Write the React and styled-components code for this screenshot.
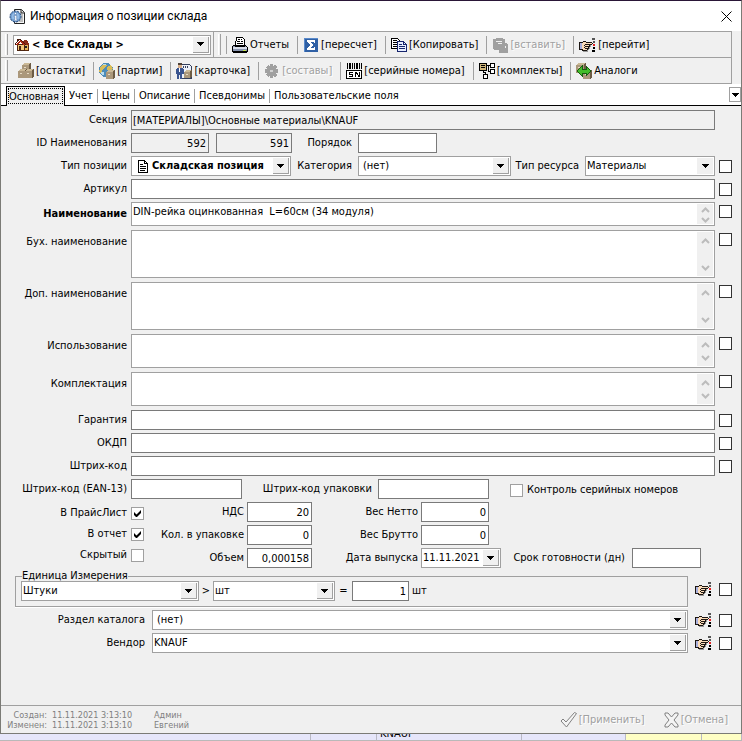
import React from "react";
import styled, { createGlobalStyle, css } from "styled-components";

const GlobalStyle = createGlobalStyle`
  * {
    box-sizing: border-box;
  }

  body {
    margin: 0;
    background: #e6e6fa;
    color: #000;
    font: 11px/14px "DejaVu Sans Condensed", "Noto Sans", sans-serif;
  }

  button, input, select, textarea {
    margin: 0;
    padding: 0;
    border: 0;
    border-radius: 0;
    background: none;
    color: inherit;
    font: inherit;
    outline: none;
  }
`;

const Page = styled.div`
  min-height: 100vh;
  display: flex;
  flex-direction: column;
`;

const Window = styled.main`
  flex: 1;
  display: flex;
  flex-direction: column;
  background: #f0f0f0;
  border: 1px solid #7b7b76;
  border-top-color: #2a1637;
`;

/* title */

const TitleBar = styled.header`
  height: 30px;
  padding: 0 7px 0 8px;
  display: flex;
  align-items: center;
  gap: 4px;
  background: #fff;

  h1 {
    flex: 1;
    margin: 0;
    font: 12px/16px Roboto, "Noto Sans", sans-serif;
  }

  button {
    display: flex;
    padding: 2px;
  }
`;

/* toolbars */

const Toolbars = styled.div`
  margin-right: 9px;
  border: solid #a0a0a0;
  border-width: 1px 1px 0 0;
`;

const Toolbar = styled.div`
  height: 26px;
  display: flex;
  align-items: center;
  border-bottom: 1px solid #a0a0a0;
`;

const Grip = styled.span`
  width: 3px;
  height: 21px;
  margin: 0 5px 0 4px;
  border-left: 1px solid #fff;
  border-right: 1px solid #a0a0a0;
`;

const BandEdge = styled.span`
  align-self: stretch;
  margin-left: 2px;
  border-left: 1px solid #a0a0a0;
`;

const Separator = styled.span`
  width: 1px;
  height: 18px;
  background: #a0a0a0;
`;

const ToolButton = styled.button`
  display: flex;
  align-items: center;
  gap: 2px;
  padding: 0 8px 0 5px;
  white-space: nowrap;

  &:disabled {
    color: #a0a0a0;
    text-shadow: 1px 1px 0 #fff;
  }
`;

/* tabs */

const Tabs = styled.nav`
  height: 22px;
  padding-left: 5px;
  display: flex;
  align-items: flex-end;
  background: #fff;
  border-bottom: 1px solid #000;
`;

const Tab = styled.button`
  height: 18px;
  padding: 0 5px 0 4px;
  white-space: nowrap;

  ${({ $active }) =>
    $active
      ? css`
          height: 20px;
          margin-bottom: -1px;
          padding: 0 5px 0 2px;
          background: #f0f0f0;
          border: solid #000;
          border-width: 1px 1px 0 1px;
          outline: 1px dotted #000;
          outline-offset: -3px;
        `
      : css`
          background: linear-gradient(#a0a0a0, #a0a0a0) right 2px / 1px 14px no-repeat;
        `}

  &:nth-last-of-type(2) {
    background: none;
  }
`;

const TabMenu = styled.button`
  width: 12px;
  height: 15px;
  margin: 0 0 3px auto;
  display: flex;
  align-items: center;
  justify-content: center;
  border: 1px solid #a0a0a0;
`;

/* fields */

const Form = styled.form`
  flex: 1;
  padding: 4px 8px 20px 0;
  display: flex;
  flex-direction: column;
  gap: 3px;
`;

const Row = styled.div`
  display: grid;
  grid-template-columns: 126px 1fr 14px;
  column-gap: 4px;
  margin-bottom: ${({ $memo }) => ($memo ? "1px" : "0")};
`;

const Label = styled.label`
  line-height: ${({ $memo }) => ($memo ? "23px" : "20px")};
  text-align: right;
  white-space: nowrap;
  font-weight: ${({ $bold }) => ($bold ? "bold" : "normal")};
`;

const Line = styled.div`
  display: flex;
  min-width: 0;
`;

const Input = styled.input`
  width: ${({ $width }) => ($width ? `${$width}px` : "100%")};
  height: 20px;
  padding: 0 2px 0 1px;
  background: ${({ readOnly }) => (readOnly ? "#f0f0f0" : "#fff")};
  border: 1px solid #7a7a7a;
  text-align: ${({ $number }) => ($number ? "right" : "left")};
`;

const Check = styled.input.attrs({ type: "checkbox" })`
  appearance: none;
  width: 13px;
  height: 13px;
  background: #fff;
  border: 1px solid ${({ $soft }) => ($soft ? "#a0a0a0" : "#333")};

  &:checked {
    background: #fff
      url("data:image/svg+xml,%3Csvg xmlns='http://www.w3.org/2000/svg' width='11' height='11'%3E%3Cpath d='M2 4v3l2 2h1l4-4V2L4.500 6.500z'/%3E%3C/svg%3E");
  }
`;

const RowCheck = styled(Check)`
  margin-top: ${({ $memo }) => ($memo ? "3px" : "4px")};
`;

const MemoBox = styled.div`
  height: ${({ $size }) => ({ small: 24, medium: 34, large: 48 })[$size]}px;
  display: flex;
  padding: 1px;
  background: #fff;
  border: 1px solid #a0a0a0;

  textarea {
    flex: 1;
    padding: 1px 0 0 0;
    overflow: hidden;
    resize: none;
  }
`;

const ScrollBar = styled.div`
  width: 16px;
  display: flex;
  flex-direction: column;
  justify-content: space-between;
  align-items: center;
  padding: ${({ $tight }) => ($tight ? "3px 0 1px" : "6px 0 5px")};
  background: #f0f0f0;

  button {
    display: flex;
  }
`;

const ComboBox = styled.div`
  ${({ $width }) => ($width ? `width: ${$width}px;` : "flex: 1;")}
  height: 20px;
  display: grid;
  grid-template-columns: auto 1fr 16px;
  align-items: center;
  padding: 1px;
  background: #fff;
  border: 1px solid #a0a0a0;
  font-weight: ${({ $bold }) => ($bold ? "bold" : "normal")};

  > svg {
    margin-right: 3px;
  }

  select, input {
    grid-column: 2 / -1;
    grid-row: 1;
    width: 100%;
    padding-left: ${({ $indent }) => ($indent ? "3px" : "0")};
    appearance: none;
  }
`;

const Arrow = styled.span`
  grid-column: 3;
  grid-row: 1;
  align-self: stretch;
  display: flex;
  align-items: center;
  justify-content: center;
  background: #f0f0f0;
  border: solid #a0a0a0;
  border-width: ${({ $flat }) => ($flat ? "0" : "0 1px 1px 0")};
  pointer-events: none;
`;

const InlineLabel = styled(Label)`
  width: ${({ $width }) => $width}px;
  padding-right: 6px;
`;

const CheckLabel = styled.label`
  display: flex;
  align-items: center;
  justify-content: flex-end;
  gap: 4px;
  height: 18px;
`;

const SideCheckLabel = styled(CheckLabel)`
  height: 20px;
  margin-left: 21px;
  padding-top: 2px;
`;

const Details = styled.div`
  display: grid;
  grid-template-columns: 143px 1fr;
  column-gap: 3px;
`;

const Flags = styled.div`
  display: flex;
  flex-direction: column;
  gap: 3px;
  padding-top: 2px;
`;

const Numbers = styled.div`
  display: grid;
  grid-template-columns: 97px 65px 103px 80px 125px 69px;
  gap: 3px;
`;

const LastLabel = styled(Label)`
  grid-column: 5;
  padding-right: 4px;
`;

const LinkedRow = styled.div`
  display: grid;
  grid-template-columns: ${({ $unit }) => ($unit ? "1fr" : "144px 1fr")} 17px 14px;
  column-gap: 7px;
  align-items: center;
  padding-left: ${({ $unit }) => ($unit ? "14px" : "0")};
`;

const UnitBox = styled.fieldset`
  min-width: 0;
  margin: 0;
  padding: 0 5px 5px;
  border: 1px solid #a0a0a0;
  box-shadow: 0 1px 0 #fff;

  legend {
    margin-left: 1px;
    padding: 0;
    line-height: 10px;
  }

  div {
    align-items: center;
  }
`;

const Sign = styled.span`
  width: ${({ $wide }) => ($wide ? "17px" : "14px")};
  text-align: center;
`;

const Unit = styled.span`
  margin-left: 3px;
`;

const IconButton = styled.button`
  display: flex;
`;

/* bottom */

const Footer = styled.footer`
  height: 28px;
  display: flex;
  align-items: center;
  gap: 6px;
  padding: 0 5px 0 6px;
  border-top: 1px solid #a0a0a0;
  color: #7f7f7f;
`;

const Stamp = styled.dl`
  flex: 1;
  margin: 0;
  display: grid;
  grid-template-columns: 40px 97px auto;
  column-gap: 5px;
  justify-content: start;
  font-size: 9px;
  line-height: 10px;

  dt {
    text-align: right;
  }

  dd {
    margin: 0;
  }
`;

const Behind = styled.div`
  height: 7px;
  display: grid;
  grid-template-columns: 311fr 66fr 145fr 104fr 76fr 40fr;
  overflow: hidden;
  border-bottom: 1px solid #b9b9b9;

  span {
    padding-left: 3px;
    line-height: 0;
    background: #e6e6fa;
    border-right: 1px solid #b9b9c4;
  }

  span:nth-child(n + 5) {
    background: #ffffc4;
  }
`;

/* icons */

const Icon = ({ width = 16, height = 16, children }) => (
  <svg width={width} height={height} viewBox={`0 0 ${width} ${height}`} fill="none" shapeRendering="crispEdges" aria-hidden="true">
    {children}
  </svg>
);

const Triangle = () => (
  <Icon width={7} height={4}>
    <path d="M0 0h7v1H0zM1 1h5v1H1zM2 2h3v1H2zM3 3h1v1H3z" fill="#000" />
  </Icon>
);

const Chevron = ({ down }) => (
  <svg width="9" height="6" viewBox="0 0 9 6" fill="none" aria-hidden="true">
    <path d={down ? "M1 1l3.500 3.500L8 1" : "M1 5l3.500-3.500L8 5"} stroke="#bcbcbc" strokeWidth="2" />
  </svg>
);

const InfoIcon = () => (
  <svg width="17" height="17" viewBox="0 0 17 17" aria-hidden="true">
    <path d="M5.500 1.500h7l3 3v11h-10z" fill="#f6f6f6" stroke="#222" />
    <path d="M12 1.500v3.500h3.500" fill="#ddd" stroke="#222" />
    <path d="M12 7h2M12 9h2M12 11h2M10 13h4" stroke="#888" />
    <circle cx="6.500" cy="8.500" r="5.500" fill="#6c9bd0" stroke="#20416e" strokeDasharray="2 1" />
    <circle cx="6.500" cy="8.500" r="3.800" fill="#94bce6" />
    <path d="M5.500 4.500h2v2h-2zM5 7.500h2.700v4H8.500v1.200H4.800v-1.200h1v-2.800H5z" fill="#fff" stroke="#204f91" strokeWidth=".4" />
  </svg>
);

const CloseIcon = () => (
  <svg width="11" height="11" viewBox="0 0 11 11" aria-hidden="true">
    <path d="M.5.500l10 10M10.500.500l-10 10" stroke="#000" />
  </svg>
);

const HouseIcon = () => (
  <Icon width={14} height={13}>
    <path d="M8 5h5v7H8z" fill="#e8b75b" stroke="#5b2b10" />
    <path d="M7 5l2-3h3l2 4v1H8z" fill="#8c2b18" />
    <path d="M2 6h7v6H2z" fill="#f2c879" stroke="#4b2410" />
    <path d="M0 7l5-5 5 5H8L5 4 2 7z" fill="#b42a12" />
    <path d="M0 7V6l5-5 5 5v1M2 3V1h1v2" stroke="#431a0e" />
    <path d="M4 8h2v4H4z" fill="#4a2715" />
    <path d="M10 8h2v2h-2z" fill="#222" />
  </Icon>
);

const PrinterIcon = () => (
  <Icon>
    <path d="M4.500.500h6l2 2v6h-9z" fill="#fff" stroke="#000" />
    <path d="M6 2.500h2M9 2.500h1M5 4.500h3M9 4.500h2M5 6.500h6" stroke="#000" />
    <path d="M1.500 8.500h2v1h9v-1h1l2 2v4h-15v-5z" fill="#8895b0" stroke="#000" />
    <path d="M1 10h14v2H1z" fill="#d7dce8" />
    <path d="M11 13h3v1h-3z" fill="#c2e34c" />
    <path d="M1 15h14v1H1z" fill="#000" />
  </Icon>
);

const SumIcon = () => (
  <Icon>
    <path d="M1 1h14v14H1z" fill="#2f60a5" />
    <path d="M1 1h14v1H1zM1 1h1v14H1z" fill="#5a8acb" />
    <path d="M4 3h8v3h-1l-1-1H7l3 3-3 3h3l1-1h1v3H4v-2l3-3-3-3z" fill="#fff" />
  </Icon>
);

const CopyIcon = () => (
  <Icon>
    <path d="M.500 1.500h6l2 2v8h-8z" fill="#fff" stroke="#000" />
    <path d="M2 3.500h4M2 5.500h5M2 7.500h5M2 9.500h4" stroke="#000" />
    <path d="M6.500 4.500h6l3 3v7h-9z" fill="#e8efff" stroke="#17256d" />
    <path d="M12.500 4.500v3h3M8 7.500h3M8 9.500h6M8 11.500h6" stroke="#17256d" />
  </Icon>
);

const PasteIcon = () => (
  <Icon>
    <path d="M1 2h3V1h7v1h2v4h1l2 2v8H7v-3H2l-1-1z" fill="#a0a0a0" />
    <path d="M4 4h6v1H4zM6 6h4v1H6zM13 9h1v2h-1z" fill="#f0f0f0" />
  </Icon>
);

const handPixels = [
  "....###.......",
  "####ppp######.",
  "#uupppppppppp#",
  "#uuppp#######.",
  "#uupp#pppp#g..",
  "#uuppp#####g..",
  "#uupp#ppp#g...",
  "#uuppp####g...",
  "####pppp#g....",
  "...#####g.....",
  "....ggggg.....",
];

const handColors = { "#": "#1c1612", p: "#fbdcb9", u: "#a9b0dd", g: "#999" };

const HandIcon = () => (
  <Icon width={17} height={14}>
    {handPixels.map((line, y) =>
      [...line].map((pixel, x) =>
        pixel === "." ? null : <rect key={`${x}-${y}`} x={x} y={y + 3} width="1" height="1" fill={handColors[pixel]} />
      )
    )}
    <path d="M13 0h3v2h-3zM14 3h2v2h-2z" fill="#555" />
    <path d="M14 6h2v2h-2z" fill="#e32222" />
    <path d="M14 9h2v2h-2zM13 12h3v2h-3z" fill="#000" />
  </Icon>
);

const Box = ({ x, y, size }) => (
  <g>
    <path d={`M${x} ${y + 2}l2-2h${size - 2}v${size - 2}l-2 2h-${size - 2}z`} fill="#6d5c45" />
    <path d={`M${x} ${y + 2}h${size - 2}v${size - 2}h-${size - 2}z`} fill="#ab987b" />
    <path d={`M${x + 2} ${y}h${size - 3}l-1 2h-${size - 2}z`} fill="#cbb997" />
    <path d={`M${x + 2} ${y + 4}h2v1h-2z`} fill="#e6dac4" />
  </g>
);

const BoxesIcon = () => (
  <Icon>
    <Box x={4} y={0} size={9} />
    <Box x={0} y={6} size={9} />
    <Box x={7} y={6} size={9} />
  </Icon>
);

const GlobeIcon = () => (
  <Icon>
    <circle cx="7" cy="7" r="7" fill="#4d8cb9" />
    <path d="M2 3l3-2 3 1-2 3-3 2-1 4-2-3zM8 4l4-2 2 4-3 2-3-1z" fill="#d9bd5a" />
    <path d="M4 1h3v1H4zM2 9h3v3H3z" fill="#b8dced" />
    <Box x={7} y={7} size={9} />
  </Icon>
);

const CardIcon = () => (
  <Icon>
    <path d="M5.500 1.500h8l2 2v12h-10z" fill="#eef2fa" stroke="#35405d" />
    <path d="M7 3h1v2H7zM9 3h1v2H9zM11 3h1v2h-1z" fill="#35405d" />
    <path d="M2 0h4v3H2z" fill="#4e4138" />
    <path d="M2 2h4v3H2z" fill="#d6ad89" />
    <path d="M1 5h6l1 2v4H6v5H4v-4H3v4H1v-5H0V7z" fill="#3b5590" />
    <path d="M3 5h1v4H3z" fill="#fff" />
    <Box x={8} y={7} size={8} />
  </Icon>
);

const GearIcon = () => (
  <Icon>
    <path d="M6 1h3v2l2-1 2 2-1 2h2v4h-2l1 2-2 2-2-1v2H6v-2l-2 1-2-2 1-2H1V6h2L2 4l2-2 2 1z" fill="#a0a0a0" />
    <path d="M6 7h3v2H6z" fill="#d0d0d0" />
  </Icon>
);

const SerialIcon = () => (
  <Icon>
    <path d="M1 0h1v6H1zM3 0h2v6H3zM6 0h1v6H6zM8 0h1v6H8zM10 0h2v6h-2zM13 0h1v6h-1zM15 0h1v6h-1z" fill="#000" />
    <path d="M.500 7.500h15v8H.500z" fill="#fff" stroke="#000" />
    <path d="M7 9.500H3.500v2H6.500v2H3M9.500 14V9.500h1l2 3.500h.500V9" stroke="#000" />
  </Icon>
);

const KitIcon = () => (
  <Icon>
    <path d="M.500.500h7v7h-7z" fill="#d1b77c" stroke="#000" />
    <path d="M2 2.500h4M2 4.500h4M8 2.500h3M9.500 2v6M9 8.500h2M4.500 8v2M4 9.500h3M6.500 9v2" stroke="#000" />
    <path d="M11.500.500h4v4h-4zM11.500 6.500h4v4h-4zM4.500 11.500h4v4h-4z" fill="#fff" stroke="#000" />
  </Icon>
);

const SwapIcon = () => (
  <Icon>
    <Box x={0} y={0} size={10} />
    <Box x={7} y={7} size={9} />
    <path d="M1 8l5-5v3h4V3l5 5-5 5v-3H6v3z" fill="#43bd29" stroke="#185e10" />
  </Icon>
);

const DocIcon = () => (
  <Icon width={16} height={13}>
    <path d="M5.500.500h6l3 3v9h-9z" fill="#fff" stroke="#000" />
    <path d="M11.500.500v3h3M7 4.500h3M7 6.500h6M7 8.500h6M7 10.500h5" stroke="#000" />
  </Icon>
);

const ApplyIcon = () => (
  <svg width="17" height="16" viewBox="0 0 17 16" aria-hidden="true">
    <path d="M1 9l2-2 3 3 8.500-9.500 2 1L6.500 15z" fill="#f4f4f4" stroke="#808080" />
  </svg>
);

const CancelIcon = () => (
  <svg width="15" height="16" viewBox="0 0 15 16" aria-hidden="true">
    <path d="M1 1h3l3.500 4L11 1h3v2l-4 5 4 5v2h-3l-3.500-4L4 15H1v-2l4-5-4-5z" fill="#f4f4f4" stroke="#808080" />
  </svg>
);

/* parts */

const Combo = ({ id, options, icon, flat, label, ...rest }) => (
  <ComboBox {...rest}>
    {icon}
    <select id={id} aria-label={label}>
      {options.map((option) => (
        <option key={option}>{option}</option>
      ))}
    </select>
    <Arrow $flat={flat}>
      <Triangle />
    </Arrow>
  </ComboBox>
);

const TextRow = ({ id, label }) => (
  <Row>
    <Label htmlFor={id}>{label}</Label>
    <Input id={id} />
    <RowCheck aria-label={label} />
  </Row>
);

const MemoRow = ({ id, label, size, bold, value }) => (
  <Row $memo>
    <Label htmlFor={id} $memo $bold={bold}>
      {label}
    </Label>
    <MemoBox $size={size}>
      <textarea id={id} defaultValue={value} />
      <ScrollBar $tight={size === "small"}>
        <button type="button" aria-label="Вверх">
          <Chevron />
        </button>
        <button type="button" aria-label="Вниз">
          <Chevron down />
        </button>
      </ScrollBar>
    </MemoBox>
    <RowCheck $memo aria-label={label} />
  </Row>
);

const NumberField = ({ id, label, value, width }) => (
  <>
    <Label htmlFor={id}>{label}</Label>
    <Input id={id} $number $width={width} defaultValue={value} />
  </>
);

const Tools = ({ items }) =>
  items.map(([text, ToolIcon, disabled], index) => (
    <React.Fragment key={text}>
      {index > 0 && <Separator />}
      <ToolButton type="button" disabled={disabled}>
        <ToolIcon />
        {text}
      </ToolButton>
    </React.Fragment>
  ));

const mainTools = [
  ["Отчеты", PrinterIcon],
  ["[пересчет]", SumIcon],
  ["[Копировать]", CopyIcon],
  ["[вставить]", PasteIcon, true],
  ["[перейти]", HandIcon],
];

const itemTools = [
  ["[остатки]", BoxesIcon],
  ["[партии]", GlobeIcon],
  ["[карточка]", CardIcon],
  ["[составы]", GearIcon, true],
  ["[серийные номера]", SerialIcon],
  ["[комплекты]", KitIcon],
  ["Аналоги", SwapIcon],
];

const tabs = ["Основная", "Учет", "Цены", "Описание", "Псевдонимы", "Пользовательские поля"];

const App = () => {
  return (
    <Page>
      <GlobalStyle />
      <Window>
        <TitleBar>
          <InfoIcon />
          <h1>Информация о позиции склада</h1>
          <button type="button" aria-label="Закрыть">
            <CloseIcon />
          </button>
        </TitleBar>

        <Toolbars>
          <Toolbar>
            <Grip />
            <Combo label="Склад" $width={198} $bold icon={<HouseIcon />} options={["< Все Склады >"]} />
            <BandEdge />
            <Grip />
            <Separator />
            <Tools items={mainTools} />
          </Toolbar>
          <Toolbar>
            <Grip />
            <Tools items={itemTools} />
          </Toolbar>
        </Toolbars>

        <Tabs>
          {tabs.map((tab, index) => (
            <Tab key={tab} type="button" $active={index === 0}>
              {tab}
            </Tab>
          ))}
          <TabMenu type="button" aria-label="Все вкладки">
            <Triangle />
          </TabMenu>
        </Tabs>

        <Form>
          <Row>
            <Label htmlFor="section">Секция</Label>
            <Input id="section" readOnly value="[МАТЕРИАЛЫ]\Основные материалы\KNAUF" />
          </Row>
          <Row>
            <Label htmlFor="nameId">ID Наименования</Label>
            <Line>
              <Input id="nameId" $width={78} $number readOnly value="592" />
              <InlineLabel as="span" $width={7} />
              <Input aria-label="ID" $width={76} $number readOnly value="591" />
              <InlineLabel htmlFor="order" $width={66}>
                Порядок
              </InlineLabel>
              <Input id="order" $width={79} />
            </Line>
          </Row>
          <Row>
            <Label htmlFor="kind">Тип позиции</Label>
            <Line>
              <Combo id="kind" $width={160} $bold icon={<DocIcon />} options={["Складская позиция"]} />
              <InlineLabel htmlFor="category" $width={67}>
                Категория
              </InlineLabel>
              <Combo id="category" $width={153} $indent options={["(нет)"]} />
              <InlineLabel htmlFor="resource" $width={74}>
                Тип ресурса
              </InlineLabel>
              <Combo id="resource" flat options={["Материалы"]} />
            </Line>
            <RowCheck aria-label="Тип позиции" />
          </Row>
          <TextRow id="article" label="Артикул" />
          <MemoRow id="name" label="Наименование" size="small" bold value="DIN-рейка оцинкованная  L=60см (34 модуля)" />
          <MemoRow id="accName" label="Бух. наименование" size="large" />
          <MemoRow id="extraName" label="Доп. наименование" size="large" />
          <MemoRow id="usage" label="Использование" size="medium" />
          <MemoRow id="bundle" label="Комплектация" size="medium" />
          <TextRow id="warranty" label="Гарантия" />
          <TextRow id="okdp" label="ОКДП" />
          <TextRow id="barcode" label="Штрих-код" />
          <Row>
            <Label htmlFor="ean">Штрих-код (EAN-13)</Label>
            <Line>
              <Input id="ean" $width={111} />
              <InlineLabel htmlFor="packCode" $width={136}>
                Штрих-код упаковки
              </InlineLabel>
              <Input id="packCode" $width={111} />
              <SideCheckLabel>
                <Check $soft />
                Контроль серийных номеров
              </SideCheckLabel>
            </Line>
          </Row>

          <Details>
            <Flags>
              <CheckLabel>
                В ПрайсЛист
                <Check $soft defaultChecked />
              </CheckLabel>
              <CheckLabel>
                В отчет
                <Check $soft defaultChecked />
              </CheckLabel>
              <CheckLabel>
                Скрытый
                <Check $soft />
              </CheckLabel>
            </Flags>
            <Numbers>
              <NumberField id="vat" label="НДС" value="20" />
              <NumberField id="net" label="Вес Нетто" value="0" width={68} />
              <span />
              <span />
              <NumberField id="pack" label="Кол. в упаковке" value="0" />
              <NumberField id="gross" label="Вес Брутто" value="0" width={68} />
              <span />
              <span />
              <NumberField id="volume" label="Объем" value="0,000158" />
              <Label htmlFor="date">Дата выпуска</Label>
              <ComboBox>
                <input id="date" defaultValue="11.11.2021" />
                <Arrow>
                  <Triangle />
                </Arrow>
              </ComboBox>
              <LastLabel htmlFor="term">Срок готовности (дн)</LastLabel>
              <Input id="term" />
            </Numbers>
          </Details>

          <LinkedRow $unit>
            <UnitBox>
              <legend>Единица Измерения</legend>
              <Line>
                <Combo label="Единица" $width={178} options={["Штуки"]} />
                <Sign>&gt;</Sign>
                <Combo label="Обозначение" $width={122} options={["шт"]} />
                <Sign $wide>=</Sign>
                <Input aria-label="Количество" $width={57} $number defaultValue="1" />
                <Unit>шт</Unit>
              </Line>
            </UnitBox>
            <IconButton type="button" aria-label="Перейти к единице">
              <HandIcon />
            </IconButton>
            <Check aria-label="Единица Измерения" />
          </LinkedRow>
          <LinkedRow>
            <Label htmlFor="catalog">Раздел каталога</Label>
            <Combo id="catalog" $indent options={["(нет)"]} />
            <IconButton type="button" aria-label="Перейти к разделу">
              <HandIcon />
            </IconButton>
            <Check aria-label="Раздел каталога" />
          </LinkedRow>
          <LinkedRow>
            <Label htmlFor="vendor">Вендор</Label>
            <Combo id="vendor" options={["KNAUF"]} />
            <IconButton type="button" aria-label="Перейти к вендору">
              <HandIcon />
            </IconButton>
            <Check aria-label="Вендор" />
          </LinkedRow>
        </Form>

        <Footer>
          <Stamp>
            <dt>Создан:</dt>
            <dd>11.11.2021 3:13:10</dd>
            <dd>Админ</dd>
            <dt>Изменен:</dt>
            <dd>11.11.2021 3:13:10</dd>
            <dd>Евгений</dd>
          </Stamp>
          <ToolButton type="button" disabled>
            <ApplyIcon />
            [Применить]
          </ToolButton>
          <ToolButton type="button" disabled>
            <CancelIcon />
            [Отмена]
          </ToolButton>
        </Footer>
      </Window>
      <Behind>
        <span />
        <span />
        <span>KNAUF</span>
        <span />
        <span />
        <span />
      </Behind>
    </Page>
  );
};

export default App;
